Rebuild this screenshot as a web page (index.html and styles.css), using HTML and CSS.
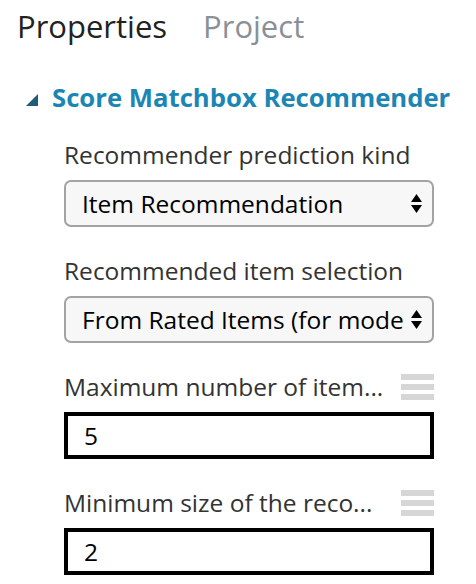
FILE: index.html
```html
<!DOCTYPE html>
<html lang="en">
<head>
<meta charset="utf-8">
<title>Properties</title>
<link rel="stylesheet" href="styles.css">
</head>
<body>
<div class="panel">
  <div class="tabs">
    <span class="tab active">Properties</span>
    <span class="tab">Project</span>
  </div>
  <div class="section-head">
    <span class="caret"></span>
    <span class="section-title">Score Matchbox Recommender</span>
  </div>
  <div class="fields">
    <div class="field">
      <div class="label-row"><span class="label">Recommender prediction kind</span></div>
      <div class="select">
        <span class="select-text">Item Recommendation</span>
        <svg class="arrows" width="11" height="20" viewBox="0 0 11 20"><path d="M5.5 0 L11 8 L0 8 Z M0 11 L11 11 L5.5 19 Z" fill="#000"/></svg>
      </div>
    </div>
    <div class="field">
      <div class="label-row"><span class="label">Recommended item selection</span></div>
      <div class="select">
        <span class="select-text">From Rated Items (for mode</span>
        <svg class="arrows" width="11" height="20" viewBox="0 0 11 20"><path d="M5.5 0 L11 8 L0 8 Z M0 11 L11 11 L5.5 19 Z" fill="#000"/></svg>
      </div>
    </div>
    <div class="field">
      <div class="label-row">
        <span class="label">Maximum number of item...</span>
        <span class="handle"><i></i><i></i><i></i></span>
      </div>
      <div class="input">5</div>
    </div>
    <div class="field">
      <div class="label-row">
        <span class="label">Minimum size of the reco...</span>
        <span class="handle"><i></i><i></i><i></i></span>
      </div>
      <div class="input">2</div>
    </div>
  </div>
</div>
</body>
</html>
```

FILE: styles.css
```css
html, body {
  margin: 0;
  padding: 0;
  background: #fff;
}
body {
  font-family: "Open Sans", "Noto Sans", "Liberation Sans", sans-serif;
  color: #333;
}
.panel {
  display: flex;
  flex-direction: column;
  padding-top: 6px;
}
.tabs {
  display: flex;
  gap: 36px;
  padding-left: 17px;
  font-size: 31px;
  line-height: 40px;
}
.tab {
  color: #8a9096;
}
.tab.active {
  color: #222;
}
.section-head {
  display: flex;
  align-items: center;
  margin-top: 36px;
  padding-left: 26px;
  height: 32px;
}
.caret {
  width: 0;
  height: 0;
  border-left: 12px solid transparent;
  border-bottom: 12px solid #1f5b78;
  margin-right: 14px;
  margin-top: 4px;
}
.section-title {
  font-size: 25.7px;
  font-weight: 700;
  line-height: 32px;
  color: #1b86b3;
  white-space: nowrap;
}
.fields {
  display: flex;
  flex-direction: column;
  padding-left: 64px;
  width: 370px;
}
.field {
  display: flex;
  flex-direction: column;
  margin-top: 27px;
}
.field + .field {
  margin-top: 30px;
}
.label-row {
  display: flex;
  justify-content: space-between;
  align-items: center;
  height: 28px;
  margin-bottom: 11px;
}
.label {
  font-size: 24.5px;
  line-height: 28px;
  color: #333;
  white-space: nowrap;
}
.handle {
  display: flex;
  flex-direction: column;
  gap: 4px;
  width: 33px;
}
.handle i {
  display: block;
  height: 6px;
  background: #d6d6d6;
}
.select {
  display: flex;
  align-items: center;
  height: 47px;
  box-sizing: border-box;
  border: 2px solid #a3a3a3;
  border-radius: 7px;
  background: #f7f7f7;
  padding: 0 10px 0 16px;
  gap: 2px;
}
.select-text {
  flex: 1;
  min-width: 0;
  overflow: hidden;
  white-space: nowrap;
  font-size: 24.5px;
  color: #000;
}
.arrows {
  flex: none;
}
.input {
  height: 47px;
  box-sizing: border-box;
  border: 4px solid #000;
  padding-left: 16px;
  display: flex;
  align-items: center;
  font-size: 24.5px;
  color: #000;
}
```
